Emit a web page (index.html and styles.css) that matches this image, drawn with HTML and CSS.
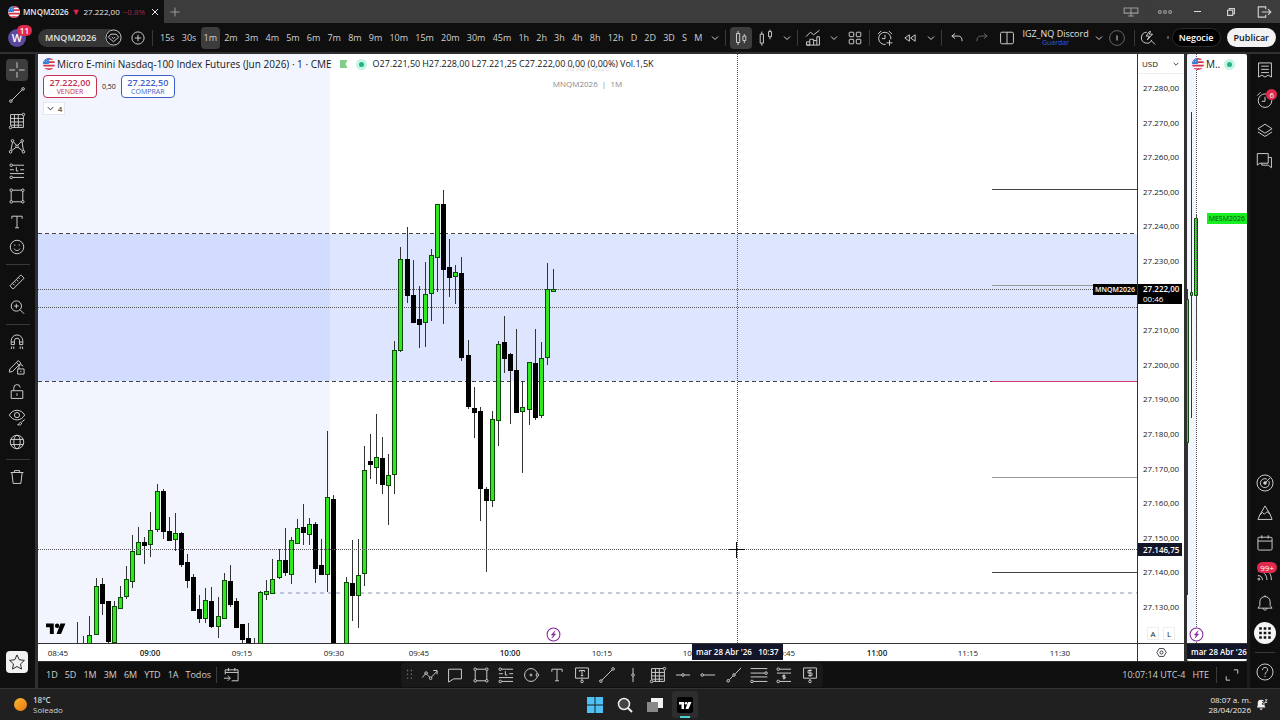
FILE: index.html
```html
<!DOCTYPE html>
<html lang="es">
<head>
    <meta charset="utf-8">
    <title>MNQM2026 27.222,00</title>
    <link rel="stylesheet" href="styles.css">
</head>
<body>
<svg class="sprite" aria-hidden="true">
    <symbol id="i-flag" viewBox="0 0 18 18"><clipPath id="round"><circle cx="9" cy="9" r="9"/></clipPath><g clip-path="url(#round)" stroke="none"><path fill="#f4f4f8" d="M0 0h18v18H0z"/><path fill="#d8324a" d="M0 0h18v2.5H0zM0 5h18v2.6H0zM0 10.200h18v2.600H0zM0 15.400h18V18H0z"/><path fill="#2f7fd6" d="M0 0h9v9H0z"/><path fill="#cfe4fa" d="M2 2h1v1H2zm3 0h1v1H5zM2 5h1v1H2zm3 0h1v1H5zm2-2h1v1H7zm0 4h1v1H7z"/></g></symbol>
    <symbol id="i-chev" viewBox="0 0 10 10"><path d="M2 3.500l3 3 3-3"/></symbol>
    <symbol id="i-close" viewBox="0 0 10 10"><path d="M2 2l6 6m0-6l-6 6"/></symbol>
    <symbol id="i-plus" viewBox="0 0 10 10"><path d="M5 .5v9M.5 5h9"/></symbol>
    <symbol id="i-gem" viewBox="0 0 28 28"><circle cx="14" cy="14" r="12.500"/><path d="M9.500 8.500h9l4 5-8.500 7.500-8.500-7.500zM11 13l3 3 3-3"/></symbol>
    <symbol id="i-addc" viewBox="0 0 28 28"><circle cx="14" cy="14" r="9.500"/><path d="M14 9v10M9 14h10"/></symbol>
    <symbol id="i-cross" viewBox="0 0 28 28"><path d="M14 2v9m0 6v9M2 14h9m6 0h9"/></symbol>
    <symbol id="i-trend" viewBox="0 0 28 28"><path d="M6 22L22 6"/><circle cx="4.500" cy="23.500" r="2"/><circle cx="23.500" cy="4.500" r="2"/></symbol>
    <symbol id="i-gann" viewBox="0 0 28 28"><path d="M4 21V4h18M6.500 24H24V6.500M4 10h20M4 15.500h20M10 4v20M16 4v20M22 20.500H4"/><circle cx="4" cy="24" r="2"/><circle cx="24" cy="4" r="2"/></symbol>
    <symbol id="i-pattern" viewBox="0 0 28 28"><path d="M4.500 21L7 8M8.500 7.500l4.500 5.500m2 0l5.500-5.500M5.500 21.500l7-5.500m3 0l7 5.500M22 8l2 13"/><circle cx="4" cy="23" r="2"/><circle cx="7" cy="6" r="2"/><circle cx="14" cy="14.500" r="2"/><circle cx="22" cy="6" r="2"/><circle cx="24" cy="23" r="2"/></symbol>
    <symbol id="i-forecast" viewBox="0 0 28 28"><path d="M7 5h18M3 18h22M7 24h18M13 8v6h3M3 12h6m10 0h6"/><circle cx="5" cy="5" r="2"/><circle cx="5" cy="24" r="2"/></symbol>
    <symbol id="i-rect" viewBox="0 0 28 28"><path d="M7 5h14M7 23h14M5 7v14M23 7v14"/><circle cx="5" cy="5" r="2"/><circle cx="23" cy="5" r="2"/><circle cx="5" cy="23" r="2"/><circle cx="23" cy="23" r="2"/></symbol>
    <symbol id="i-text" viewBox="0 0 28 28"><path d="M6 9V5h16v4M14 5v18m-3 0h6"/></symbol>
    <symbol id="i-smile" viewBox="0 0 28 28"><circle cx="14" cy="14" r="10.500"/><path d="M9.500 16.500c2 4 7 4 9 0M10.500 10v2m7-2v2"/></symbol>
    <symbol id="i-ruler" viewBox="0 0 28 28"><path d="M3 20L20 3l5 5L8 25zM7 16l3 3m0-6l2 2m1-5l3 3m0-6l2 2"/></symbol>
    <symbol id="i-zoom" viewBox="0 0 28 28"><circle cx="13" cy="12.500" r="8"/><path d="M19 18.500l6 6M13 9v7m-3.500-3.500h7"/></symbol>
    <symbol id="i-magnet" viewBox="0 0 28 28"><path d="M5 18v-6a9 9 0 0 1 18 0v6h-5v-6a4 4 0 0 0-8 0v6zM5 14h5m8 0h5M6 21l-1 4m4-4v4m10-4v4m3-4l1 4"/></symbol>
    <symbol id="i-penlock" viewBox="0 0 28 28"><path d="M3 17L16 4l4 4L7 21l-5 1zM13 7l4 4M15 17h10v8H15zM17 17v-3a3 3 0 0 1 6-1M20 20v2"/></symbol>
    <symbol id="i-lock" viewBox="0 0 28 28"><path d="M5 12h18v12H5zM9 12V8a5 5 0 0 1 10-1M14 16v4"/></symbol>
    <symbol id="i-eye" viewBox="0 0 28 28"><path d="M2 11c6-10 18-10 24 0-6 10-18 10-24 0z"/><circle cx="14" cy="11" r="4"/><path d="M26 18l-5 4m-1 0c-3 0-2 4-5 4 4 1 7 0 6-3"/></symbol>
    <symbol id="i-globe" viewBox="0 0 28 28"><circle cx="14" cy="14" r="10.500"/><ellipse cx="14" cy="14" rx="5" ry="10.500"/><path d="M4 10h20M4 18h20"/></symbol>
    <symbol id="i-trash" viewBox="0 0 28 28"><path d="M4 7h20M10 7V4h8v3M6 7l2 17h12l2-17"/></symbol>
    <symbol id="i-star" viewBox="0 0 28 28"><path d="M14 3l3.500 7.500 8 1-6 5.500 1.500 8-7-4-7 4 1.500-8-6-5.500 8-1z"/></symbol>
    <symbol id="i-candles" viewBox="0 0 28 28"><path d="M7 7h5v14H7zM9.500 3v4m0 14v4M17 11h4.500v7H17zM19.200 8v3m0 7v4"/></symbol>
    <symbol id="i-candles2" viewBox="0 0 28 28"><path d="M5 8h5v14H5zM7.500 4v4m0 14v4M18 4h4.500v8H18zM20.200 1v3m0 8v4"/></symbol>
    <symbol id="i-ind" viewBox="0 0 28 28"><path d="M3 12l7-7 5 4 9-7M4 25v-5h5v5zM9 20v-4h6v9M15 18h5v-6h4v13H4M20 18v7"/></symbol>
    <symbol id="i-four" viewBox="0 0 28 28"><rect x="5" y="5" width="7" height="7" rx="1"/><rect x="16" y="5" width="7" height="7" rx="1"/><rect x="5" y="16" width="7" height="7" rx="1"/><rect x="16" y="16" width="7" height="7" rx="1"/></symbol>
    <symbol id="i-alarmadd" viewBox="0 0 28 28"><path d="M15 24a9.500 9.500 0 1 1 8-8M14 9v6H9M3 8l5-5m12 0l5 5M21 17v9m-4.500-4.500h9"/></symbol>
    <symbol id="i-alarm" viewBox="0 0 28 28"><circle cx="14" cy="15" r="10.500"/><path d="M14 9v7H9M2 7l5-5"/></symbol>
    <symbol id="i-rewind" viewBox="0 0 28 28"><path d="M13 9v10l-7-5zM22 9v10l-7-5z"/></symbol>
    <symbol id="i-undo" viewBox="0 0 28 28"><path d="M11 7l-5 4 5 4M6 11h10c4 0 6 3 6 8"/></symbol>
    <symbol id="i-redo" viewBox="0 0 28 28"><path d="M17 7l5 4-5 4M22 11H12c-4 0-6 3-6 8"/></symbol>
    <symbol id="i-layout" viewBox="0 0 28 28"><rect x="4" y="5" width="20" height="18" rx="2"/><path d="M14 5v18"/></symbol>
    <symbol id="i-info" viewBox="0 0 28 28"><circle cx="14" cy="14" r="11.500"/><path stroke="#ddd" d="M14 10v8"/></symbol>
    <symbol id="i-flash" viewBox="0 0 28 28"><path d="M12 5a8.500 8.500 0 1 0 8 12M20 19l5 5M16 4l-5 7h5l-3 6 8-9h-5l2-4z"/></symbol>
    <symbol id="i-list" viewBox="0 0 28 28"><path d="M4 3h20v22l-5-3-5 3-5-3-5 3zM8 8h12M8 13h12M8 18h12"/></symbol>
    <symbol id="i-layers" viewBox="0 0 28 28"><path d="M14 5l11 7-11 7-11-7zM3 17l11 7 11-7"/></symbol>
    <symbol id="i-chat" viewBox="0 0 28 28"><path d="M9 19H6l-4 3V4h17v6h5v16l-5-4H9zM19 10v9H9"/></symbol>
    <symbol id="i-target" viewBox="0 0 28 28"><circle cx="14" cy="14" r="12.500"/><path d="M20 11a7 7 0 1 1-3-3M14 14l8-8"/><circle cx="14" cy="14" r="2" fill="currentColor"/></symbol>
    <symbol id="i-peak" viewBox="0 0 28 28"><path d="M6 17l8-14 8 13-5-4-4 4-3-3zM6 17l-3 7h22l-3-8"/></symbol>
    <symbol id="i-cal" viewBox="0 0 28 28"><rect x="3" y="5" width="22" height="20" rx="2"/><path d="M3 11h22"/><path d="M9 2v5m10-5v5"/></symbol>
    <symbol id="i-rss" viewBox="0 0 28 28"><path d="M3 4c13 0 21 9 21 21M3 11c9 0 14 6 14 14M3 18c5 0 7 3 7 7"/><circle cx="4.500" cy="23.500" r="1.500"/></symbol>
    <symbol id="i-bell" viewBox="0 0 28 28"><path d="M3 22h22l-3-4v-6a8 8 0 0 0-16 0v6zM11 22c0 4 6 4 6 0M14 4V2"/></symbol>
    <symbol id="i-nine" viewBox="0 0 28 28"><path fill="#111" stroke="none" d="M5 5h4v4H5zm7 0h4v4h-4zm7 0h4v4h-4zM5 12h4v4H5zm7 0h4v4h-4zm7 0h4v4h-4zM5 19h4v4H5zm7 0h4v4h-4zm7 0h4v4h-4z"/></symbol>
    <symbol id="i-help" viewBox="0 0 28 28"><circle cx="14" cy="14" r="12.500"/><path d="M10 11c0-6 9-5 8 0 0 3-4 3-4 7m0 2v2"/></symbol>
    <symbol id="i-goto" viewBox="0 0 28 28"><path d="M5 13V6h20v17H15M5 10h20M10 3v5m10-5v5M3 19h9m-3-4l4 4-4 4"/></symbol>
    <symbol id="i-grip" viewBox="0 0 12 28"><path stroke-dasharray="2 4" d="M3 6v17M9 6v17"/></symbol>
    <symbol id="i-poly" viewBox="0 0 28 28"><path d="M2 18l5-6M9 13l4.500 4.500M16.500 17L25 8M19 7h6v6"/><circle cx="8" cy="11" r="2"/><circle cx="15" cy="19" r="2"/></symbol>
    <symbol id="i-comment" viewBox="0 0 28 28"><path d="M4 5h20v15H12l-8 5z"/></symbol>
    <symbol id="i-circle" viewBox="0 0 28 28"><circle cx="14" cy="14" r="10"/><circle cx="14" cy="14" r="1.500"/><circle cx="24" cy="14" r="2" fill="#191919"/></symbol>
    <symbol id="i-note" viewBox="0 0 28 28"><path d="M13 19H4V3h20v16h-9M10 9V7h8v2M14 7v8m-2 0h4M14 17v5"/><circle cx="14" cy="24" r="2"/></symbol>
    <symbol id="i-vline" viewBox="0 0 28 28"><path d="M14 3v9m0 4v9"/><circle cx="14" cy="14" r="2"/></symbol>
    <symbol id="i-hline" viewBox="0 0 28 28"><path d="M3 14h9m4 0h9"/><circle cx="14" cy="14" r="2"/></symbol>
    <symbol id="i-ray" viewBox="0 0 28 28"><path d="M7 14h18"/><circle cx="5" cy="14" r="2"/></symbol>
    <symbol id="i-ext" viewBox="0 0 28 28"><path d="M7 21l5-5m4-4l9-9"/><circle cx="5" cy="23" r="2"/><circle cx="14" cy="14" r="2"/></symbol>
    <symbol id="i-fib" viewBox="0 0 28 28"><path d="M1 4h26M1 11h22M1 17h26M5 24h22"/><circle cx="25" cy="11" r="2"/><circle cx="3" cy="24" r="2"/></symbol>
    <symbol id="i-range" viewBox="0 0 28 28"><path d="M7 5h18M3 11h22M7 24h18M14 13v8M12 19h4v-2h-4v-2h4"/><circle cx="5" cy="5" r="2"/><circle cx="5" cy="24" r="2"/></symbol>
    <symbol id="i-pricenote" viewBox="0 0 28 28"><path d="M13 19H4V3h20v16h-9M17 7h-6v4h6v4h-6M14 5v12m0 2v3"/><circle cx="14" cy="24" r="2"/></symbol>
    <symbol id="i-full" viewBox="0 0 28 28"><path d="M17 6h6v6M11 22H5v-6"/></symbol>
    <symbol id="i-gear" viewBox="0 0 28 28"><path d="M8 4h12l6 10-6 10H8L2 14z"/><circle cx="14" cy="14" r="4"/></symbol>
    <symbol id="i-bolt" viewBox="0 0 28 28"><circle cx="14" cy="14" r="12" fill="#fff" stroke-width="2"/><path fill="currentColor" d="M17 7l-7 8h4l-3 6 7-8h-4z"/></symbol>
    <symbol id="i-tv" viewBox="0 0 36 20"><path fill="currentColor" stroke="none" d="M0 0h14v19H7V7H0zM26 0h9l-8 19h-8z"/><circle cx="20" cy="4" r="4" fill="currentColor" stroke="none"/></symbol>
    <symbol id="i-screens" viewBox="0 0 28 20"><path d="M2 3h24v9H2zM14 3v14m-5 0h10"/></symbol>
    <symbol id="i-dots" viewBox="0 0 28 20"><circle cx="5" cy="10" r="2.500"/><circle cx="14" cy="10" r="2.500"/><circle cx="23" cy="10" r="2.500"/></symbol>
    <symbol id="i-restore" viewBox="0 0 28 28"><path d="M8 11h9v9H8zM11 11V8h9v9h-3"/></symbol>
    <symbol id="i-exit" viewBox="0 0 28 28"><path d="M17 9V5H4v18h13v-4M10 14h16m-5-5l5 5-5 5"/></symbol>
</svg>

<header class="tabs">
    <div class="tab">
        <svg class="flag"><use href="#i-flag"/></svg>
        <b>MNQM2026</b><span class="down">▼</span><span>27.222,00</span><span class="pct">−0.8%</span>
        <button class="tiny" aria-label="Cerrar"><svg><use href="#i-close"/></svg></button>
    </div>
    <button class="tiny add" aria-label="Nueva pestaña"><svg><use href="#i-plus"/></svg></button>
    <div class="window">
        <button class="faint" aria-label="Pantallas"><svg><use href="#i-screens"/></svg></button>
        <i class="vsep"></i>
        <button class="faint" aria-label="Menú"><svg><use href="#i-dots"/></svg></button>
        <button aria-label="Minimizar"><span class="min"></span></button>
        <button aria-label="Restaurar"><svg><use href="#i-restore"/></svg></button>
        <button aria-label="Salir"><svg><use href="#i-exit"/></svg></button>
    </div>
</header>

<nav class="toolbar">
    <button class="avatar" aria-label="Perfil">W<span class="badge">11</span></button>
    <button class="symbol">MNQM2026<svg><use href="#i-gem"/></svg></button>
    <button class="ic" aria-label="Comparar"><svg><use href="#i-addc"/></svg></button>
    <i class="vsep"></i>
    <div class="intervals">
        <button>15s</button><button>30s</button><button class="on">1m</button><button>2m</button><button>3m</button><button>4m</button><button>5m</button><button>6m</button><button>7m</button><button>8m</button><button>9m</button><button>10m</button><button>15m</button><button>20m</button><button>30m</button><button>45m</button><button>1h</button><button>2h</button><button>3h</button><button>4h</button><button>8h</button><button>12h</button><button>D</button><button>2D</button><button>3D</button><button>S</button><button>M</button>
    </div>
    <button class="chev" aria-label="Intervalos"><svg><use href="#i-chev"/></svg></button>
    <i class="vsep"></i>
    <button class="ic on" aria-label="Velas"><svg><use href="#i-candles"/></svg></button>
    <button class="ic" aria-label="Velas huecas"><svg><use href="#i-candles2"/></svg></button>
    <button class="chev" aria-label="Tipos"><svg><use href="#i-chev"/></svg></button>
    <i class="vsep"></i>
    <button class="ic" aria-label="Indicadores"><svg><use href="#i-ind"/></svg></button>
    <button class="chev" aria-label="Favoritos"><svg><use href="#i-chev"/></svg></button>
    <button class="ic" aria-label="Plantillas"><svg><use href="#i-four"/></svg></button>
    <i class="vsep"></i>
    <button class="ic" aria-label="Alerta"><svg><use href="#i-alarmadd"/></svg></button>
    <button class="ic" aria-label="Reproducir"><svg><use href="#i-rewind"/></svg></button>
    <button class="chev" aria-label="Más"><svg><use href="#i-chev"/></svg></button>
    <i class="vsep"></i>
    <button class="ic" aria-label="Deshacer"><svg><use href="#i-undo"/></svg></button>
    <button class="ic dim" aria-label="Rehacer"><svg><use href="#i-redo"/></svg></button>
    <div class="right">
        <button class="ic" aria-label="Diseño"><svg><use href="#i-layout"/></svg></button>
        <button class="layout-name">IGZ_NQ Discord<span>Guardar</span></button>
        <button class="chev" aria-label="Diseños"><svg><use href="#i-chev"/></svg></button>
        <button class="ic dim" aria-label="Información"><svg><use href="#i-info"/></svg></button>
        <i class="vsep"></i>
        <button class="ic" aria-label="Búsqueda rápida"><svg><use href="#i-flash"/></svg></button>
        <i class="speck"></i>
        <button class="pill dark">Negocie</button>
        <button class="pill light">Publicar</button>
    </div>
</nav>

<main class="work">
    <aside class="draw">
        <div class="group tall">
            <button class="ic on" aria-label="Cruz"><svg><use href="#i-cross"/></svg></button>
            <button class="ic" aria-label="Línea"><svg><use href="#i-trend"/></svg></button>
            <button class="ic" aria-label="Gann"><svg><use href="#i-gann"/></svg></button>
            <button class="ic" aria-label="Patrones"><svg><use href="#i-pattern"/></svg></button>
            <button class="ic" aria-label="Predicción"><svg><use href="#i-forecast"/></svg></button>
            <button class="ic" aria-label="Formas"><svg><use href="#i-rect"/></svg></button>
            <button class="ic" aria-label="Texto"><svg><use href="#i-text"/></svg></button>
            <button class="ic" aria-label="Iconos"><svg><use href="#i-smile"/></svg></button>
        </div>
        <hr>
        <div class="group">
            <button class="ic" aria-label="Medir"><svg><use href="#i-ruler"/></svg></button>
            <button class="ic" aria-label="Acercar"><svg><use href="#i-zoom"/></svg></button>
        </div>
        <hr>
        <div class="group">
            <button class="ic" aria-label="Imán"><svg><use href="#i-magnet"/></svg></button>
            <button class="ic" aria-label="Modo dibujo"><svg><use href="#i-penlock"/></svg></button>
            <button class="ic" aria-label="Bloquear"><svg><use href="#i-lock"/></svg></button>
            <button class="ic" aria-label="Ocultar"><svg><use href="#i-eye"/></svg></button>
            <button class="ic" aria-label="Sincronizar"><svg><use href="#i-globe"/></svg></button>
        </div>
        <hr>
        <button class="ic" aria-label="Eliminar"><svg><use href="#i-trash"/></svg></button>
        <button class="ic fav" aria-label="Favoritos"><svg><use href="#i-star"/></svg></button>
    </aside>

    <div class="center">
        <div class="charts">
            <section class="chart">
                <div class="plotcol">
                    <div class="plot">
                        <svg class="canvas">
                            <rect class="session" width="292" height="100%"/>
                            <rect class="zone" y="180" width="100%" height="147"/>
                            <rect class="zone-session" y="180" width="292" height="147"/>
                            <line class="dash" y1="179.500" x2="100%" y2="179.500"/>
                            <line class="dash" y1="327.500" x2="100%" y2="327.500"/>
                            <line class="dots" y1="235.500" x2="100%" y2="235.500"/>
                            <line class="dots" y1="253.500" x2="100%" y2="253.500"/>
                            <line class="dash blue" x1="226" y1="539" x2="100%" y2="539"/>
                            <svg x="100%" overflow="visible">
                                <path class="lv" d="M-145 135.500H0"/>
                                <path class="lv gray" d="M-145 231.500H0"/>
                                <path class="lv red" d="M-145 327.500H0"/>
                                <path class="lv gray" d="M-145 423.500H0"/>
                                <path class="lv" d="M-145 518.500H0"/>
                            </svg>
                            <g id="candles"></g>
                            <line class="dots" y1="495.500" x2="100%" y2="495.500"/>
                            <line class="dots" x1="699.500" x2="699.500" y2="100%"/>
                            <path class="cursor" d="M691 495.500h16M698.500 488v16"/>
                        </svg>
                        <p class="watermark"><span>28 Abr 2026</span>MNQM2026 &nbsp;|&nbsp; 1M</p>
                        <div class="legend">
                            <svg class="flag"><use href="#i-flag"/></svg>
                            <h1>Micro E-mini Nasdaq-100 Index Futures (Jun 2026) · 1 · CME</h1>
                            <i class="mark"></i><i class="live"></i>
                            <div class="ohlc"><span>O27.221,50</span><span>H27.228,00</span><span>L27.221,25</span><span>C27.222,00</span><span>0,00 (0,00%)</span><span>Vol.1,5K</span></div>
                        </div>
                        <div class="trade">
                            <button class="sell"><b>27.222,00</b>VENDER</button>
                            <span>0,50</span>
                            <button class="buy"><b>27.222,50</b>COMPRAR</button>
                        </div>
                        <button class="count"><svg><use href="#i-chev"/></svg>4</button>
                        <svg class="logo"><use href="#i-tv"/></svg>
                        <svg class="bolt"><use href="#i-bolt"/></svg>
                        <span class="tag name">MNQM2026</span>
                    </div>
                    <div class="timeaxis">
                        <svg id="times"></svg>
                        <span class="tag when">mar 28 Abr '26 &nbsp; 10:37</span>
                    </div>
                </div>
                <div class="pricecol">
                    <div class="prices">
                        <label class="currency"><select aria-label="Moneda"><option>USD</option></select><svg><use href="#i-chev"/></svg></label>
                        <ul>
                            <li>27.280,00</li><li>27.270,00</li><li>27.260,00</li><li>27.250,00</li><li>27.240,00</li><li>27.230,00</li><li></li><li>27.210,00</li><li>27.200,00</li><li>27.190,00</li><li>27.180,00</li><li>27.170,00</li><li>27.160,00</li><li>27.150,00</li><li>27.140,00</li><li>27.130,00</li>
                        </ul>
                        <div class="scale"><button>A</button><button>L</button></div>
                        <span class="tag last"><b>27.222,00</b>00:46</span>
                        <span class="tag hover">27.146,75</span>
                    </div>
                    <button class="gear" aria-label="Ajustes"><svg><use href="#i-gear"/></svg></button>
                </div>
            </section>
            <section class="side">
                <div class="plot">
                    <svg class="canvas">
                        <rect class="session" width="9" height="100%"/>
                        <path class="wick" d="M.5 235v306M4.500 58v306M9.500 161v146"/>
                        <path class="up" d="M-1.500 245.500h3v143h-3zM3.500 238.500h2v3h-2zM7.500 164.500h3v77h-3z"/>
                        <line class="dots" x1="9.500" x2="9.500" y2="100%"/>
                    </svg>
                    <div class="legend"><svg class="flag"><use href="#i-flag"/></svg><h2>M..</h2><i class="live"></i></div>
                    <span class="tag mes">MESM2026</span>
                    <svg class="bolt"><use href="#i-bolt"/></svg>
                </div>
                <div class="sideaxis">mar 28 Abr '26</div>
            </section>
        </div>
        <footer class="bottom">
            <div class="ranges">
                <button>1D</button><button>5D</button><button>1M</button><button>3M</button><button>6M</button><button>YTD</button><button>1A</button><button>Todos</button>
                <i class="vsep"></i>
                <button class="ic" aria-label="Ir a"><svg><use href="#i-goto"/></svg></button>
            </div>
            <div class="palette">
                <svg class="grip"><use href="#i-grip"/></svg>
                <button class="ic" aria-label="Trazo"><svg><use href="#i-poly"/></svg></button>
                <button class="ic" aria-label="Comentario"><svg><use href="#i-comment"/></svg></button>
                <button class="ic" aria-label="Rectángulo"><svg><use href="#i-rect"/></svg></button>
                <button class="ic" aria-label="Posición larga"><svg><use href="#i-forecast"/></svg></button>
                <button class="ic" aria-label="Círculo"><svg><use href="#i-circle"/></svg></button>
                <button class="ic" aria-label="Texto"><svg><use href="#i-text"/></svg></button>
                <button class="ic" aria-label="Nota"><svg><use href="#i-note"/></svg></button>
                <button class="ic" aria-label="Línea"><svg><use href="#i-trend"/></svg></button>
                <button class="ic" aria-label="Vertical"><svg><use href="#i-vline"/></svg></button>
                <button class="ic" aria-label="Gann"><svg><use href="#i-gann"/></svg></button>
                <button class="ic" aria-label="Horizontal"><svg><use href="#i-hline"/></svg></button>
                <button class="ic" aria-label="Rayo horizontal"><svg><use href="#i-ray"/></svg></button>
                <button class="ic" aria-label="Rayo"><svg><use href="#i-ext"/></svg></button>
                <button class="ic" aria-label="Fibonacci"><svg><use href="#i-fib"/></svg></button>
                <button class="ic" aria-label="Posición corta"><svg><use href="#i-range"/></svg></button>
                <button class="ic" aria-label="Nota de precio"><svg><use href="#i-pricenote"/></svg></button>
            </div>
            <div class="clock">
                <button>10:07:14 UTC-4</button><button>HTE</button>
                <i class="vsep"></i>
                <button class="ic" aria-label="Pantalla completa"><svg><use href="#i-full"/></svg></button>
            </div>
        </footer>
    </div>

    <aside class="widgets">
        <button aria-label="Lista"><svg><use href="#i-list"/></svg></button>
        <button aria-label="Alertas"><svg><use href="#i-alarm"/></svg><span class="badge">6</span></button>
        <button aria-label="Objetos"><svg><use href="#i-layers"/></svg></button>
        <button aria-label="Chat"><svg><use href="#i-chat"/></svg></button>
        <div class="low">
            <button aria-label="Filtros"><svg><use href="#i-target"/></svg></button>
            <button aria-label="Pine"><svg><use href="#i-peak"/></svg></button>
            <button aria-label="Calendario"><svg><use href="#i-cal"/></svg></button>
            <button aria-label="Ideas"><svg><use href="#i-rss"/></svg><span class="badge">99+</span></button>
            <button aria-label="Notificaciones"><svg><use href="#i-bell"/></svg></button>
            <button class="apps" aria-label="Productos"><svg><use href="#i-nine"/></svg></button>
            <hr>
            <button aria-label="Ayuda"><svg><use href="#i-help"/></svg></button>
        </div>
    </aside>
</main>

<footer class="taskbar">
    <div class="weather"><i class="sun"></i><p><b>18°C</b><br>Soleado</p></div>
    <div class="apps-row">
        <button aria-label="Inicio"><svg viewBox="0 0 16 16"><path fill="#4cc2f5" stroke="none" d="M0 0h7.500v7.500H0zM8.500 0H16v7.500H8.500zM0 8.500h7.500V16H0zM8.500 8.500H16V16H8.500z"/></svg></button>
        <button aria-label="Buscar"><svg viewBox="0 0 16 16"><circle cx="7" cy="7" r="5.500" fill="#444" stroke="#eee" stroke-width="1.500"/><path stroke="#eee" stroke-width="2" d="M11 11l4 4"/></svg></button>
        <button aria-label="Vista de tareas"><svg viewBox="0 0 16 16"><path fill="#f2f2f2" stroke="none" d="M4 1h12v10H4z"/><path fill="#888" stroke="none" d="M0 5h11v10H0z"/></svg></button>
        <button class="active" aria-label="TradingView"><svg viewBox="0 0 16 16"><rect width="16" height="16" rx="2" fill="#000" stroke="none"/><path fill="#fff" stroke="none" d="M2 5h5v7H4.500V7.500H2zM11 5h3.500l-3 7H8.500z"/><circle cx="9" cy="6.200" r="1.300" fill="#fff" stroke="none"/></svg></button>
    </div>
    <div class="tray"><p>08:07 a. m.<br>28/04/2026</p><svg viewBox="0 0 14 14"><path fill="#f2f2f2" stroke="none" d="M1 10h10l-1-2V5a4 4 0 0 0-8 0v3zM4 11h4l-2 2z"/><path stroke="#202020" d="M7 3h3L7 6h3"/><path d="M10.500 1H13l-2.500 3H13"/></svg></div>
</footer>

<script src="chart.js"></script>
</body>
</html>
```
FILE: styles.css
```css
*
{
    box-sizing:border-box;
}
body
{
    margin:0;
    height:100vh;
    display:flex;
    flex-direction:column;
    overflow:hidden;
    background-color:#0f0f0f;
    color:#d0d0d0;
    font-family:"Trebuchet MS", "Open Sans", sans-serif;
    font-size:9px;
    font-weight:500;
    line-height:12px;
}
button, select
{
    font:inherit;
    color:inherit;
    background:none;
    border:0;
    padding:0;
    margin:0;
    white-space:nowrap;
}
b
{
    font-weight:600;
}
svg
{
    fill:none;
    stroke:currentColor;
    display:block;
    flex:none;
}
p, ul, h1, h2
{
    margin:0;
    padding:0;
    list-style:none;
}
.sprite
{
    position:absolute;
    width:0;
    height:0;
}
.flag
{
    width:12px;
    height:12px;
}
.vsep
{
    width:1px;
    height:16px;
    background-color:#3a3a3a;
    flex:none;
}
hr
{
    width:24px;
    height:1px;
    border:0;
    margin:6px 0;
    background-color:#3a3a3a;
}
.badge
{
    position:absolute;
    top:-4px;
    right:-6px;
    min-width:10px;
    padding:0 3px;
    height:11px;
    line-height:11px;
    border-radius:6px;
    background-color:#e0294d;
    color:white;
    font-size:8px;
}

/* window tabs */
.tabs
{
    height:23px;
    display:flex;
    align-items:center;
    background-color:#3c3c3c;
    flex:none;
}
.tab
{
    width:164px;
    height:24px;
    padding:0 4px 0 8px;
    display:flex;
    align-items:center;
    gap:3px;
    background-color:#0f0f0f;
    color:#e8e8e8;
    white-space:nowrap;
    font-size:8px;
}
.down
{
    color:#e0294d;
    font-size:9px;
}
.pct
{
    color:#a02840;
    flex:1;
}
.tiny
{
    width:10px;
    height:10px;
}
.tiny svg
{
    width:10px;
    height:10px;
}
.add
{
    margin-left:6px;
    color:#999;
}
.window
{
    margin-left:auto;
    display:flex;
    align-items:center;
}
.window button
{
    width:33px;
    height:20px;
    display:flex;
    align-items:center;
    justify-content:center;
}
.window .faint
{
    color:#999;
}
.window svg
{
    width:16px;
    height:16px;
    stroke-width:2;
}
.min
{
    width:7px;
    height:1px;
    background-color:#ddd;
}

/* top toolbar */
.toolbar
{
    height:29px;
    display:flex;
    align-items:center;
    gap:3px;
    padding:0 4px 0 8px;
    flex:none;
}
.toolbar .vsep
{
    margin-right:1px;
}
.ic
{
    width:22px;
    height:22px;
    display:flex;
    align-items:center;
    justify-content:center;
    border-radius:4px;
    flex:none;
}
.ic svg
{
    width:18px;
    height:18px;
    stroke-width:1.5;
}
.on
{
    background-color:#3d3d3d;
    border-radius:4px;
}
.dim
{
    color:#666;
}
.chev
{
    width:14px;
    height:22px;
    display:flex;
    align-items:center;
    justify-content:center;
    flex:none;
}
.chev svg
{
    width:10px;
    height:10px;
}
.avatar
{
    position:relative;
    width:18px;
    height:18px;
    border-radius:9px;
    background-color:#5b4a9c;
    color:white;
    font-size:11px;
    font-weight:600;
    flex:none;
}
.symbol
{
    margin:0 2px 0 9px;
    width:84px;
    height:18px;
    border-radius:9px;
    padding-left:7px;
    display:flex;
    align-items:center;
    justify-content:space-between;
    background-color:#363636;
    font-weight:600;
    color:#e0e0e0;
    flex:none;
}
.symbol svg
{
    width:17px;
    height:17px;
    border-radius:9px;
    background-color:#111;
    stroke-width:1.5;
}
.intervals
{
    width:549px;
    display:flex;
    justify-content:space-between;
}
.intervals button
{
    height:22px;
    padding:0 3px;
}
.right
{
    margin-left:auto;
    display:flex;
    align-items:center;
}
.layout-name
{
    margin:0 3px 0 4px;
    line-height:10px;
    display:flex;
    flex-direction:column;
    align-items:center;
    color:#e0e0e0;
}
.layout-name span
{
    font-size:7px;
    line-height:8px;
    color:#2f5de0;
}
.right .vsep
{
    margin:0 2px 0 6px;
}
.speck
{
    width:2px;
    height:3px;
    margin:0 3px 0 8px;
    background-color:#555;
}
.pill
{
    height:19px;
    padding:0 7px;
    border-radius:10px;
    font-weight:600;
}
.pill.dark
{
    margin-right:6px;
    background-color:#000;
    color:#fff;
    border:1px solid #2a2a2a;
    padding:0 6px;
}
.pill.light
{
    background-color:#f2f2f2;
    color:#111;
}

/* main area */
.work
{
    flex:1;
    min-height:0;
    display:flex;
    border-top:2px solid #303030;
}
.draw
{
    width:38px;
    padding:5px 0 15px 6px;
    border-right:3px solid #303030;
    display:flex;
    flex-direction:column;
    flex:none;
}
.group
{
    display:flex;
    flex-direction:column;
    gap:3px;
}
.tall
{
    height:199px;
    gap:0;
    justify-content:space-between;
}
.fav
{
    margin-top:auto;
    background-color:#f2f2f2;
    color:#222;
}
.center
{
    flex:1;
    min-width:0;
    display:flex;
    flex-direction:column;
}
.charts
{
    flex:1;
    min-height:0;
    display:flex;
    gap:3px;
    background-color:#303030;
    padding-bottom:1px;
}
.chart
{
    flex:1;
    min-width:0;
    display:flex;
    background-color:white;
    color:#131722;
}
.plotcol
{
    flex:1;
    min-width:0;
    display:flex;
    flex-direction:column;
}
.plot
{
    position:relative;
    flex:1;
    min-height:0;
    overflow:hidden;
    border-bottom:1px solid #333;
}
.canvas
{
    position:absolute;
    width:100%;
    height:100%;
    stroke:none;
}
.session
{
    fill:#f2f5fe;
}
.zone
{
    fill:#dee6ff;
}
.zone-session
{
    fill:#d1dcff;
}
.dash
{
    stroke:#444;
    stroke-dasharray:4 3;
}
.dash.blue
{
    stroke:#8a93bb;
    stroke-dasharray:4 4;
}
.dots
{
    stroke:#555;
    stroke-dasharray:1 1;
}
.lv
{
    stroke:#444;
}
.lv.gray
{
    stroke:#999;
}
.lv.red
{
    stroke:#d03c66;
}
.wick
{
    stroke:#333;
}
.up
{
    fill:#2fe81e;
    stroke:#0d4a0a;
}
.down-body
{
    fill:#000;
    stroke:#000;
}
.cursor
{
    stroke:#111;
}
.legend
{
    position:absolute;
    top:4px;
    left:5px;
    height:12px;
    display:flex;
    align-items:center;
    gap:4px;
    white-space:nowrap;
    font-size:9px;
}
.legend h1, .legend h2
{
    margin-left:-2px;
    font-size:10px;
    font-weight:500;
}
.ohlc
{
    display:flex;
    gap:2px;
    margin-left:2px;
}
.mark
{
    width:8px;
    height:8px;
    margin:0 4px;
    background-color:#7fcf86;
    clip-path:polygon(0 0, 100% 0, 75% 50%, 100% 100%, 0 100%);
}
.live
{
    width:11px;
    height:11px;
    border-radius:6px;
    border:3px solid #c5f3e4;
    background-color:#22b287;
}
.trade
{
    position:absolute;
    top:21px;
    left:5px;
    display:flex;
    align-items:center;
    gap:5px;
    font-size:7px;
}
.trade button
{
    width:54px;
    height:23px;
    border:1px solid;
    border-radius:4px;
    background-color:white;
    line-height:9px;
}
.trade b
{
    display:block;
    font-size:9px;
}
.sell
{
    color:#c4304f;
}
.buy
{
    color:#3d5fd0;
}
.count
{
    position:absolute;
    top:48px;
    left:5px;
    width:22px;
    height:13px;
    border:1px solid #e4e6ee;
    background-color:white;
    display:flex;
    align-items:center;
    justify-content:space-around;
    font-size:8px;
}
.count svg
{
    width:9px;
    height:9px;
}
.watermark
{
    position:absolute;
    top:8px;
    left:0;
    width:100%;
    text-align:center;
    color:#888;
    font-size:8px;
}
.watermark span
{
    display:block;
    margin-bottom:4px;
    color:#ddd;
}
.logo
{
    position:absolute;
    left:8px;
    bottom:8px;
    width:20px;
    height:12px;
    color:#000;
}
.bolt
{
    position:absolute;
    left:508px;
    bottom:1px;
    width:15px;
    height:15px;
    color:#86269e;
}
.side .bolt
{
    left:2px;
}
.tag
{
    position:absolute;
    background-color:#000;
    color:white;
    white-space:nowrap;
    font-size:8px;
    line-height:11px;
}
.name
{
    right:0;
    top:230px;
    padding:0 2px;
    font-size:7px;
    font-weight:600;
}
.timeaxis
{
    position:relative;
    height:17px;
}
.timeaxis > svg
{
    width:100%;
    height:17px;
    stroke:none;
    fill:#131722;
    text-anchor:middle;
    font-size:8px;
}
.major
{
    font-weight:600;
}
.when
{
    left:654px;
    top:0;
    padding:0 4px;
    line-height:16px;
    background-color:#131528;
    font-weight:600;
}
.pricecol
{
    width:47px;
    border-left:1px solid #333;
    display:flex;
    flex-direction:column;
    font-size:8px;
}
.prices
{
    position:relative;
    flex:1;
    display:flex;
    flex-direction:column;
    border-bottom:1px solid #333;
}
.currency
{
    height:20px;
    padding:0 4px;
    display:flex;
    align-items:center;
    justify-content:space-between;
    border-bottom:1px solid #eee;
}
.currency select
{
    appearance:none;
    flex:1;
}
.currency svg
{
    width:8px;
    height:8px;
}
.prices ul
{
    flex:1;
    margin:8px 0 0 5px;
    display:flex;
    flex-direction:column;
    justify-content:space-between;
}
.prices li
{
    min-height:12px;
}
.scale
{
    height:30px;
    display:flex;
    align-items:flex-end;
    justify-content:center;
    gap:4px;
    padding-bottom:3px;
}
.scale button
{
    width:12px;
    height:13px;
    border:1px solid #eee;
}
.last
{
    left:0;
    top:230px;
    width:44px;
    padding-left:5px;
    line-height:10px;
}
.last b
{
    display:block;
}
.hover
{
    left:0;
    top:489px;
    width:44px;
    padding-left:5px;
    line-height:13px;
    background-color:#131528;
    font-weight:600;
}
.gear
{
    height:17px;
    display:flex;
    align-items:center;
    justify-content:center;
}
.gear svg
{
    width:11px;
    height:11px;
    stroke-width:2;
}
.side
{
    width:60px;
    display:flex;
    flex-direction:column;
    background-color:white;
    color:#131722;
    overflow:hidden;
    border-radius:2px;
}
.mes
{
    right:0;
    top:159px;
    padding:0 2px;
    background-color:#19ee22;
    color:#0a4a0a;
    font-size:7px;
}
.sideaxis
{
    height:15px;
    margin-bottom:2px;
    padding-left:4px;
    background-color:#131528;
    color:white;
    font-size:8px;
    font-weight:600;
    line-height:15px;
    white-space:nowrap;
}

/* ranges, favourites and clock */
.bottom
{
    height:26px;
    display:flex;
    align-items:center;
    flex:none;
}
.ranges
{
    width:30%;
    padding-left:5px;
    display:flex;
    align-items:center;
    gap:1px;
}
.ranges button
{
    padding:0 3px;
}
.ranges .vsep
{
    margin:0 2px 0 1px;
}
.bottom .ic
{
    padding:0;
}
.palette
{
    width:422px;
    height:24px;
    padding:0 2px 0 4px;
    display:flex;
    align-items:center;
    justify-content:space-between;
    border-radius:4px;
    background-color:#191919;
}
.grip
{
    width:9px;
    height:18px;
    margin-right:2px;
    color:#777;
    stroke-width:2;
}
.clock
{
    margin-left:auto;
    padding-right:4px;
    display:flex;
    align-items:center;
    gap:7px;
}
.clock .ic
{
    margin-left:-3px;
}

/* right column */
.widgets
{
    width:33px;
    border-left:3px solid #1c1c1c;
    padding:5px 0 5px 5px;
    display:flex;
    flex-direction:column;
    gap:8px;
    flex:none;
}
.widgets button
{
    position:relative;
    width:20px;
    height:22px;
    display:flex;
    align-items:center;
    justify-content:center;
}
.widgets svg
{
    width:18px;
    height:18px;
    stroke-width:1.5;
}
.widgets .badge
{
    top:0;
    right:-2px;
}
.low
{
    margin-top:auto;
    display:flex;
    flex-direction:column;
    gap:8px;
}
.low hr
{
    width:20px;
    margin:0;
}
.widgets .apps
{
    height:22px;
    width:22px;
    margin-left:-1px;
    border-radius:11px;
    background-color:#f5f5f5;
}

/* taskbar */
.taskbar
{
    height:32px;
    display:grid;
    grid-template-columns:1fr auto 1fr;
    align-items:center;
    background-color:#202020;
    border-top:1px solid #333;
    font-size:8px;
    line-height:10px;
    flex:none;
}
.weather
{
    display:flex;
    align-items:center;
    gap:6px;
    padding-left:14px;
}
.sun
{
    width:13px;
    height:13px;
    border-radius:7px;
    background:linear-gradient(135deg, #f8bb35, #ee7411);
}
.apps-row
{
    display:flex;
    gap:4px;
}
.apps-row button
{
    width:26px;
    height:27px;
    display:flex;
    align-items:center;
    justify-content:center;
    border-radius:3px;
}
.apps-row svg
{
    width:16px;
    height:16px;
}
.apps-row .active
{
    position:relative;
    background-color:#2d2d2d;
}
.active::after
{
    content:"";
    position:absolute;
    left:8px;
    right:8px;
    bottom:0;
    height:2px;
    background-color:#4cd5d0;
}
.tray
{
    display:flex;
    align-items:center;
    justify-content:flex-end;
    gap:5px;
    padding-right:12px;
    text-align:right;
    color:#eee;
}
.tray svg
{
    width:12px;
    height:12px;
}
```
FILE: chart.js
```js
// one row per minute: direction, high, body top, body bottom, low (plot pixels)
var bars = [
    ["k",568,600,620,620], ["k",582,600,620,620], ["g",562,581,600,600], ["g",524,532,580,581], ["k",524,530,549,561],
    ["k",547,547,587,589], ["g",547,552,588,588], ["g",532,543,554,554], ["g",512,525,542,545], ["g",481,497,527,534],
    ["g",473,488,500,501], ["k",483,488,491,510], ["g",458,476,490,503], ["g",430,437,475,478], ["k",435,437,477,485],
    ["k",463,477,486,487], ["g",459,479,485,497], ["k",478,479,510,513], ["k",500,508,526,534], ["k",520,523,556,556],
    ["k",541,555,564,569], ["g",534,546,564,569], ["k",533,547,572,574], ["g",543,562,572,584], ["g",519,526,564,565],
    ["k",511,527,550,553], ["k",544,547,573,573], ["k",570,570,585,589], ["k",569,584,588,589], ["k",584,600,610,610],
    ["g",537,538,600,600], ["g",526,537,540,546], ["g",505,525,539,539], ["g",495,506,523,525], ["k",474,506,518,522],
    ["g",483,486,520,530], ["g",465,474,489,490], ["k",450,473,478,491], ["g",464,470,480,491], ["k",468,470,514,529],
    ["k",485,511,520,520], ["g",377,443,520,538], ["k",441,445,600,600], null, ["g",523,528,600,600],
    ["k",486,529,541,567], ["g",485,521,541,574], ["g",392,416,519,532], ["k",380,407,410,425], ["g",360,403,413,430],
    ["k",383,404,430,440], ["g",400,421,431,471], ["g",287,296,420,440], ["g",193,205,296,298], ["k",173,205,241,249],
    ["k",206,241,268,268], ["k",232,265,270,294], ["g",208,240,268,293], ["g",195,201,239,267], ["g",150,150,203,238],
    ["k",136,150,215,270], ["k",185,213,223,243], ["g",211,218,222,250], ["k",203,219,303,307], ["k",286,301,352,355],
    ["k",333,354,358,384], ["k",353,357,434,467], ["k",433,435,446,518], ["g",357,365,446,453], ["g",287,290,366,392],
    ["k",262,288,304,319], ["k",299,300,316,370], ["k",275,316,358,358], ["g",327,353,357,419], ["g",308,308,355,371],
    ["k",275,309,363,366], ["g",288,304,361,364], ["g",209,235,303,311], ["g",215,235,237,238]
];
var times = [
    ["08:45",20], ["09:00",112,1], ["09:15",204], ["09:30",296], ["09:45",381], ["10:00",472,1], ["10:15",564],
    ["10:30",655], ["10:45",747], ["11:00",839,1], ["11:15",930], ["11:30",1022]
];
var ns = "http://www.w3.org/2000/svg";

function add(parent, name, attrs)
{
    var el = document.createElementNS(ns, name);
    for (var key in attrs) el.setAttribute(key, attrs[key]);
    parent.appendChild(el);
    return el;
}

var layer = document.getElementById("candles");
bars.forEach(function (bar, i)
{
    if (!bar) return;
    var x = Math.floor(39.7 + i * 6.1) + 0.5;
    add(layer, "path", {"class": "wick", d: "M" + x + " " + bar[1] + "V" + bar[4]});
    add(layer, "rect", {
        "class": bar[0] == "g" ? "up" : "down-body",
        x: x - 2, y: bar[2] + 0.5, width: 4, height: Math.max(bar[3] - bar[2], 1)
    });
});

var axis = document.getElementById("times");
times.forEach(function (t)
{
    add(axis, "text", {x: t[1], y: 12, "class": t[2] ? "major" : ""}).textContent = t[0];
});
```
